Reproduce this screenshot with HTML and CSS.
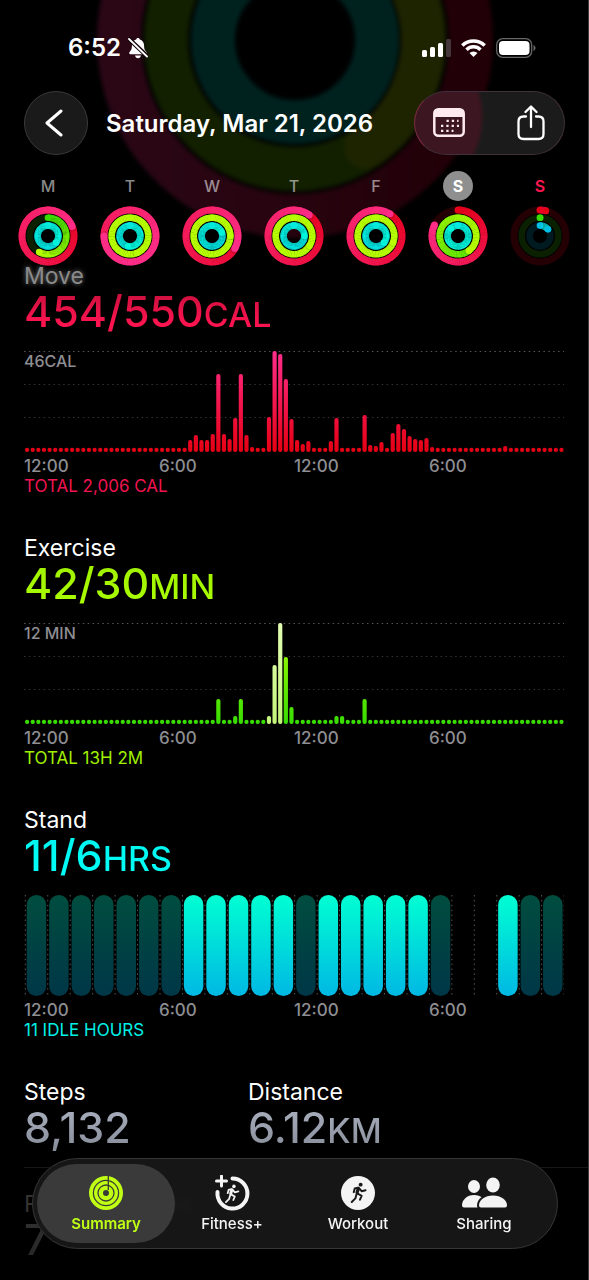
FILE: index.html
```html
<!DOCTYPE html>
<html lang="en">
<head>
  <meta charset="UTF-8">
  <meta name="viewport" content="width=device-width, initial-scale=1.0">
  <title>Fitness Summary</title>
  <link rel="stylesheet" href="styles.css">
</head>
<body>
  <svg class="backdrop" viewBox="0 0 400 400" aria-hidden="true">
    <defs>
      <linearGradient id="backdropMove"><stop offset="0" stop-color="#2b0716"/><stop offset="1" stop-color="#220007"/></linearGradient>
    </defs>
    <g fill="none" stroke-width="44">
      <circle cx="200" cy="200" r="176" stroke="url(#backdropMove)"/>
      <circle cx="200" cy="200" r="129" stroke="#122000"/>
      <path d="M200 71A129 129 0 0 1 271 307" stroke="#1e2400" stroke-linecap="round"/>
      <circle cx="200" cy="200" r="82" stroke="#00221f"/>
    </g>
  </svg>

  <header class="top">
    <div class="status">
      <div class="status-left">
        <span class="time">6:52</span>
        <svg width="20" height="22" viewBox="0 0 20 22" aria-label="Silent">
          <path fill="#fff" d="M10 1c-1 0-1.700.7-1.800 1.500C5.500 3.300 3.900 5.500 3.900 8.500c0 4-1 5-2.300 6.400-.9 1-.4 2.300.9 2.300h15c1.300 0 1.800-1.300.9-2.300C17.100 13.500 16.100 12.500 16.100 8.500c0-3-1.600-5.200-4.300-6C11.700 1.700 11 1 10 1zM7 18.600h6c-.3 1.600-1.500 2.600-3 2.600s-2.700-1-3-2.600z"/>
          <path stroke="#14040a" stroke-width="4.400" d="M0 1l20 19"/>
          <path stroke="#fff" stroke-width="1.800" stroke-linecap="round" d="M1 2l18 17.500"/>
        </svg>
      </div>
      <div class="status-right">
        <svg width="29" height="18" viewBox="0 0 29 18" aria-label="Signal">
          <g fill="#fff"><rect y="11" width="5" height="7" rx="1.500"/><rect x="8" y="8" width="5" height="10" rx="1.500"/><rect x="16" y="4" width="5" height="14" rx="1.500"/></g>
          <rect x="24" width="5" height="18" rx="1.500" fill="#45363a"/>
        </svg>
        <svg width="25" height="18" viewBox="0 0 25 18" aria-label="Wi-Fi">
          <g fill="none" stroke="#fff" stroke-width="3.500">
            <path d="M1.300 6.500a16 16 0 0 1 22.400 0"/>
            <path d="M5.500 10.700a10 10 0 0 1 14 0"/>
          </g>
          <path fill="#fff" d="M12.500 18l-4-4a5.800 5.800 0 0 1 8 0z"/>
        </svg>
        <svg width="40" height="20" viewBox="0 0 40 20" aria-label="Battery">
          <rect x=".700" y=".700" width="35" height="18.600" rx="6" fill="none" stroke="#666" stroke-width="1.300"/>
          <rect x="3" y="3" width="30.500" height="14" rx="4" fill="#fff"/>
          <path d="M37.500 7v6c1.200-.5 2-1.600 2-3s-.8-2.500-2-3z" fill="#666"/>
        </svg>
      </div>
    </div>

    <div class="nav">
      <button class="back" aria-label="Back">
        <svg width="18" height="28" viewBox="0 0 18 28"><path d="M16 2L2 14l14 12" fill="none" stroke="#fff" stroke-width="3" stroke-linecap="round" stroke-linejoin="round"/></svg>
      </button>
      <h1>Saturday, Mar 21, 2026</h1>
      <div class="actions">
        <button aria-label="Calendar">
          <svg width="32" height="30" viewBox="0 0 32 30">
            <rect x="1.300" y="1.300" width="29.400" height="26.500" rx="4" fill="none" stroke="#ffeaf0" stroke-width="2.500"/>
            <path d="M1 9V5q0-4 4-4h22q4 0 4 4v4z" fill="#ffeaf0"/>
            <path d="M13.500 12.900h12M8 17.900h18M8 22.900h12.500" stroke="#ffeaf0" stroke-width="2.300" stroke-dasharray="2.300 3"/>
          </svg>
        </button>
        <button aria-label="Share">
          <svg width="30" height="36" viewBox="0 0 30 36">
            <g fill="none" stroke="#fff" stroke-width="2.300" stroke-linecap="round" stroke-linejoin="round">
              <path d="M10 11.500H7.500q-5 0-5 5v12.500q0 5 5 5h15q5 0 5-5V16.500q0-5-5-5H20M15 22V2M9.500 7L15 1.500 20.500 7"/>
            </g>
          </svg>
        </button>
      </div>
    </div>

    <nav class="week" id="week" aria-label="Days of the week"></nav>
  </header>

  <main>
    <section class="metric move">
      <h2>Move</h2>
      <p class="value">454/550<small>CAL</small></p>
      <div class="chart" id="moveChart"><span class="peak">46CAL</span></div>
      <div class="axis"><span>12:00</span><span>6:00</span><span>12:00</span><span>6:00</span></div>
      <p class="total">TOTAL 2,006 CAL</p>
    </section>

    <section class="metric exercise">
      <h2>Exercise</h2>
      <p class="value">42/30<small>MIN</small></p>
      <div class="chart" id="exerciseChart"><span class="peak">12 MIN</span></div>
      <div class="axis"><span>12:00</span><span>6:00</span><span>12:00</span><span>6:00</span></div>
      <p class="total">TOTAL 13H 2M</p>
    </section>

    <section class="metric stand">
      <h2>Stand</h2>
      <p class="value">11/6<small>HRS</small></p>
      <div class="chart" id="standChart"></div>
      <div class="axis"><span>12:00</span><span>6:00</span><span>12:00</span><span>6:00</span></div>
      <p class="total">11 IDLE HOURS</p>
    </section>

    <section class="stats">
      <div>
        <h2>Steps</h2>
        <p class="value">8,132</p>
      </div>
      <div>
        <h2>Distance</h2>
        <p class="value">6.12<small>KM</small></p>
      </div>
    </section>

    <section class="stats faded">
      <div>
        <h2>Flights Climbed</h2>
        <p class="value">7</p>
      </div>
    </section>
  </main>

  <nav class="tabs">
    <a href="#" class="active">
      <svg width="36" height="36" viewBox="0 0 36 36">
        <circle cx="18" cy="18" r="17" fill="#c0ff14"/>
        <g fill="none" stroke="#3a3b36" stroke-width="1.300">
          <circle cx="18" cy="18" r="12.600"/>
          <circle cx="18" cy="18" r="8"/>
          <path d="M20.300 1v14"/>
        </g>
        <circle cx="18" cy="18" r="3" fill="#3a3b36"/>
      </svg>
      Summary
    </a>
    <a href="#">
      <svg width="36" height="36" viewBox="0 0 36 36">
        <path d="M18.500 3.500A15 15 0 1 1 3.500 17" fill="none" stroke="#f4f4f4" stroke-width="4" stroke-linecap="round"/>
        <path d="M7.500 1v10M2.500 6h10" stroke="#f4f4f4" stroke-width="3" stroke-linecap="round"/>
        <svg x="10" y="9" width="16" height="19" viewBox="0 0 51 64" color="#f4f4f4"><use href="#runner"/></svg>
      </svg>
      Fitness+
    </a>
    <a href="#">
      <svg width="36" height="36" viewBox="0 0 36 36">
        <defs>
          <g id="runner" fill="none" stroke="currentColor" stroke-width="6" stroke-linecap="round" stroke-linejoin="round">
            <circle cx="32" cy="8" r="6" fill="currentColor" stroke="none"/>
            <path d="M25 20l-4 13" stroke-width="10"/>
            <path d="M24 17l-10 3-3 11M27 19l8 9 12-3M22 35l13 7-5 12M19 39l-3 11L5 61"/>
          </g>
        </defs>
        <circle cx="18" cy="18" r="17" fill="#f4f4f4"/>
        <svg x="10" y="7" width="17" height="21" viewBox="0 0 51 64" color="#191919"><use href="#runner"/></svg>
      </svg>
      Workout
    </a>
    <a href="#">
      <svg width="46" height="36" viewBox="0 0 46 36">
        <g fill="#f4f4f4">
          <ellipse cx="13" cy="11.500" rx="6" ry="6.500"/>
          <path d="M1 30c0-5 5-10 12-10s12 5 12 10q0 2.500-2 2.500H3q-2 0-2-2.500z"/>
          <ellipse cx="32" cy="10" rx="6.800" ry="7.500"/>
          <path d="M17 30.500c0-6 6.500-11 15-11s15 5 15 11q0 3-3 3H20q-3 0-3-3z" stroke="#191919" stroke-width="2"/>
        </g>
      </svg>
      Sharing
    </a>
  </nav>

  <script>
    const MOVE = ['#e6001a', '#ff2d87'];
    const EXERCISE = ['#37dc00', '#b8ff00'];
    const STAND = ['#00bfe6', '#00ffd4'];
    const TRACKS = ['#240004', '#0a2000', '#001a22'];

    // Share of the goal reached: move, exercise, stand
    const days = [
      { letter: 'M', rings: [1.19, 0.58, 1.36] },
      { letter: 'T', rings: [1.75, 2.44, 1.53] },
      { letter: 'W', rings: [1.33, 2.25, 1.2] },
      { letter: 'T', rings: [1.1, 2.34, 1.25] },
      { letter: 'F', rings: [1.09, 2.31, 1.36] },
      { letter: 'S', rings: [0.82, 1.4, 1.88], state: 'selected' },
      { letter: 'S', rings: [0.035, 0.001, 0.14], state: 'today' }
    ];

    function mix(from, to, t) {
      const channel = (hex, i) => parseInt(hex.slice(1 + i * 2, 3 + i * 2), 16);
      const parts = [0, 1, 2].map(i => Math.round(channel(from, i) + (channel(to, i) - channel(from, i)) * t));
      return `rgb(${parts.join(',')})`;
    }

    function point(r, turn) {
      const a = turn * Math.PI * 2;
      return [(30 + r * Math.sin(a)).toFixed(2), (30 - r * Math.cos(a)).toFixed(2)];
    }

    // A ring is made of short arcs so that the colour can follow the curve
    function ring(r, width, amount, colors, track) {
      let out = `<circle cx="30" cy="30" r="${r}" fill="none" stroke="${track}" stroke-width="${width}"/>`;
      const [sx, sy] = point(r, 0);
      out += `<circle cx="${sx}" cy="${sy}" r="${width / 2}" fill="${colors[0]}"/>`;
      const start = Math.max(0, amount - 1);
      const steps = 72;
      for (let i = 0; i < steps; i++) {
        const a = start + (amount - start) * i / steps;
        const b = start + (amount - start) * (i + 1.2) / steps;
        const end = Math.min(b, amount);
        const [x1, y1] = point(r, a);
        const [x2, y2] = point(r, end);
        out += `<path d="M${x1} ${y1}A${r} ${r} 0 0 1 ${x2} ${y2}" fill="none" stroke="${mix(colors[0], colors[1], Math.min(1, a / Math.min(amount, 1.3)))}" stroke-width="${width}"/>`;
      }
      const [ex, ey] = point(r, amount);
      if (amount > 1) {
        const [hx, hy] = point(r, amount + 0.008);
        out += `<circle cx="${hx}" cy="${hy}" r="${width / 2}" fill="#000" opacity="0.15"/>`;
      }
      out += `<circle cx="${ex}" cy="${ey}" r="${width / 2}" fill="${amount < 0.2 ? colors[0] : colors[1]}"/>`;
      return out;
    }

    document.getElementById('week').innerHTML = days.map(day => {
      const stand = day.rings[2] > 1 ? ['#00d6e0', '#00f4da'] : STAND;
      return `
      <button class="day ${day.state || ''}">
        <span>${day.letter}</span>
        <svg width="60" height="60" viewBox="0 0 60 60">
          <circle cx="30" cy="30" r="18" fill="none" stroke="#000" stroke-width="21"/>
          ${ring(26, 7, day.rings[0], MOVE, TRACKS[0])}
          ${ring(18.3, 6.6, day.rings[1], EXERCISE, TRACKS[1])}
          ${ring(10.4, 6.6, day.rings[2], stand, TRACKS[2])}
        </svg>
      </button>`;
    }).join('');

    // One bar for every 15 minutes; slots that are not listed stay at the base height
    const moveBars = {
      29: 12, 30: 17, 31: 12, 32: 12, 33: 18, 34: 78, 35: 18, 36: 13, 37: 34, 38: 78, 39: 17, 40: 5,
      43: 35, 44: 101, 45: 98, 46: 73, 47: 33, 48: 12, 49: 8, 50: 11, 54: 11, 55: 34,
      60: 37, 61: 7, 62: 6, 63: 10, 65: 19, 66: 28, 67: 23, 68: 16, 69: 13, 70: 12, 71: 14, 72: 5, 85: 6
    };
    const exerciseBars = { 34: 25, 37: 8, 38: 25, 43: 8, 44: 59, 45: 101, 46: 67, 47: 17, 55: 8, 56: 8, 60: 25 };
    const workoutSlots = [43, 44, 45];

    function gradient(id, bottom, top) {
      return `<linearGradient id="${id}" gradientUnits="userSpaceOnUse" x1="0" y1="101" x2="0" y2="0">
        <stop offset="0" stop-color="${bottom}"/><stop offset="1" stop-color="${top}"/></linearGradient>`;
    }

    function barChart(target, name, bars, colors, bright) {
      let out = `<svg viewBox="0 0 540 101"><defs>${gradient(name, colors[0], colors[1])}${gradient(name + 'Bright', '#c4f47a', '#e2ffb4')}</defs>`;
      [0.5, 33.5, 66.5].forEach((y, i) => {
        out += `<path class="grid-line" d="M0 ${y}H540" opacity="${i ? 0.6 : 1}"/>`;
      });
      for (let i = 0; i < 96; i++) {
        const h = bars[i] || 4.2;
        const fill = bright.includes(i) ? name + 'Bright' : name;
        out += `<rect x="${1 + i * 5.625}" y="${101 - h}" width="4.200" height="${h}" rx="2" fill="url(#${fill})"/>`;
      }
      document.getElementById(target).insertAdjacentHTML('beforeend', out + '</svg>');
    }

    barChart('moveChart', 'moveFill', moveBars, ['#e60012', '#ff2d8c'], []);
    barChart('exerciseChart', 'exerciseFill', exerciseBars, ['#37dc00', '#b0ff00'], workoutSlots);

    // Stand hours: 1 = stood, 0 = idle, - = no data
    const hours = '0000000111110111110--100';
    let stand = `<svg viewBox="0 0 540 101"><defs>${gradient('stood', '#00b8e4', '#00ffd2')}${gradient('idle', '#003747', '#004d3f')}</defs>`;
    for (let i = 0; i <= 24; i++) {
      stand += `<path class="grid-line" d="M${1.3 + i * 22.45} 0V101"/>`;
    }
    [...hours].forEach((hour, i) => {
      if (hour === '-') return;
      stand += `<rect x="${2.7 + i * 22.45}" y="0" width="19.500" height="101" rx="9.700" fill="url(#${hour === '1' ? 'stood' : 'idle'})"/>`;
    });
    document.getElementById('standChart').innerHTML = stand + '</svg>';
  </script>
</body>
</html>
```
FILE: styles.css
```css
/* General Styles */
* {
  box-sizing: border-box;
}

body {
  position: relative;
  min-height: 100vh;
  margin: 0;
  background: #000;
  border-right: 1px solid #3c3c3c;
  color: #fff;
  font-family: Inter, "Liberation Sans", sans-serif;
  overflow-x: hidden;
}

h1, h2, p {
  margin: 0;
  font-weight: 400;
}

button {
  padding: 0;
  background: none;
  border: none;
  color: inherit;
  font-family: inherit;
  cursor: pointer;
}

svg {
  display: block;
}

/* Large blurred rings behind the header */
.backdrop {
  position: absolute;
  top: -160px;
  left: 50%;
  width: 400px;
  margin-left: -199px;
  filter: blur(2px);
}

/* Header */
.top {
  position: relative;
}

.status {
  display: flex;
  justify-content: space-between;
  align-items: center;
  height: 91px;
  padding: 4px 52px 0 68px;
}

.status-left, .status-right {
  display: flex;
  align-items: center;
}

.status-left {
  gap: 7px;
}

.status-right {
  gap: 10px;
}

.time {
  font-size: 24px;
  font-weight: 600;
}

.nav {
  display: flex;
  align-items: center;
  height: 64px;
  padding: 0 23px 0 24px;
}

.back {
  display: flex;
  align-items: center;
  justify-content: center;
  width: 64px;
  height: 64px;
  padding-right: 4px;
  background: #1a1a1a;
  border: 1px solid #3a3a3a;
  border-radius: 50%;
}

.nav h1 {
  margin-left: 18px;
  font-size: 24px;
  font-weight: 600;
  white-space: nowrap;
}

.actions {
  display: flex;
  align-items: center;
  justify-content: space-between;
  width: 151px;
  height: 64px;
  margin-left: auto;
  padding: 0 18px;
  background: radial-gradient(ellipse 70px 80px at 0 40%, #3c1620 92%, #1b1b1b);
  border: 1px solid #40303a;
  border-left-color: #7a2c40;
  border-radius: 32px;
}

.week {
  display: grid;
  grid-template-columns: repeat(7, 1fr);
  padding: 16px 7px 0;
}

.day {
  display: flex;
  flex-direction: column;
  align-items: center;
  gap: 5px;
}

.day span {
  width: 30px;
  height: 30px;
  border-radius: 50%;
  color: rgba(255, 255, 255, 0.55);
  font-size: 16px;
  font-weight: 500;
  line-height: 30px;
}

.day.selected span {
  background: #8f8f8f;
  color: #fff;
  font-weight: 700;
}

.day.today span {
  color: #ff1650;
  font-weight: 600;
}

/* Metrics */
main {
  position: relative;
  margin-top: -5px;
}

.metric {
  height: 272px;
  padding: 0 24px;
}

h2 {
  font-size: 23px;
  line-height: 30px;
}

.value {
  width: fit-content;
  background-clip: text;
  -webkit-background-clip: text;
  color: transparent;
  font-size: 43px;
  font-weight: 500;
  line-height: 40px;
}

.value small {
  font-size: 34px;
  font-weight: 500;
  line-height: 34px;
}

.chart {
  position: relative;
  margin-top: 19px;
}

.chart svg {
  width: 100%;
}

.grid-line {
  fill: none;
  stroke: #555;
  stroke-dasharray: 1.5 3.4;
}

.peak {
  position: absolute;
  top: 0;
  left: 0;
  color: #8e8e93;
  font-size: 16px;
  font-weight: 500;
  line-height: 20px;
}

.axis {
  display: grid;
  grid-template-columns: repeat(4, 1fr);
  margin-top: 4px;
  color: #8e8e93;
  font-size: 17px;
  font-weight: 500;
  line-height: 20px;
}

.total {
  font-size: 17px;
  line-height: 20px;
}

.move h2 {
  color: #8a8a8a;
  text-shadow: 0 0 5px #777;
}

.move .value {
  background-image: linear-gradient(#c8103c, #ff1450 80%);
}

.move .total {
  color: #f01450;
}

.exercise .value {
  background-image: linear-gradient(#a0f000, #aaff00);
}

.exercise .total {
  color: #a0f000;
}

.stand .value {
  background-image: linear-gradient(#00f5f0, #00fff8);
}

.stand .total {
  color: #00f0e8;
}

.stats {
  display: grid;
  grid-template-columns: 224px 1fr;
  height: 90px;
  margin-left: 24px;
}

.stats .value {
  /* room for the tail of the comma */
  padding-bottom: 4px;
  background-image: linear-gradient(#a9afbd, #868c98);
}

.faded {
  height: 112px;
  padding-top: 21px;
  border-top: 1px solid #161616;
}

.faded h2 {
  color: #333;
}

.faded .value {
  background-image: linear-gradient(#303030, #262626);
}

/* Bottom tab bar */
.tabs {
  position: fixed;
  right: 31px;
  bottom: 31px;
  left: 32px;
  display: grid;
  grid-template-columns: repeat(4, 1fr);
  height: 91px;
  padding: 5px 10px;
  background: rgba(25, 25, 25, 0.88);
  border: 1px solid #363636;
  border-radius: 46px;
  backdrop-filter: blur(3px);
}

.tabs a {
  display: flex;
  flex-direction: column;
  align-items: center;
  gap: 3px;
  padding-top: 11px;
  color: #f4f4f4;
  font-size: 15px;
  font-weight: 500;
  line-height: 20px;
  text-decoration: none;
}

.tabs .active {
  margin: 0 -6px;
  background: rgba(60, 60, 60, 0.95);
  border-radius: 40px;
  color: #c0ff14;
  font-weight: 600;
}
```
